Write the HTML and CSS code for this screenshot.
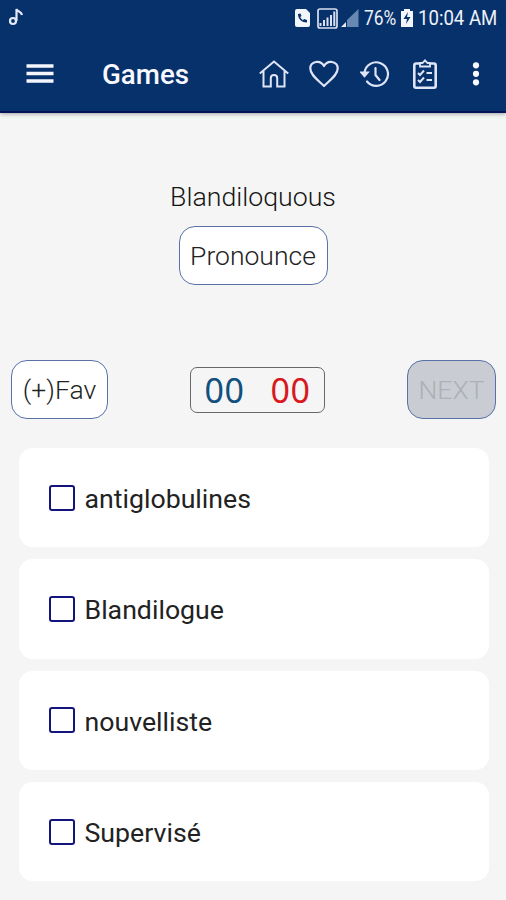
FILE: index.html
```html
<!DOCTYPE html>
<html lang="en">
<head>
<meta charset="utf-8">
<title>Games</title>
<link rel="stylesheet" href="styles.css">
</head>
<body>
<header class="top">
  <div class="status">
    <svg class="note" width="16" height="20" viewBox="0 0 16 20" fill="none" stroke="#e6eaf6" stroke-width="2.200"><circle cx="5" cy="14" r="3"/><path d="M8.500 14V2c1 3 5 2 5.500 6"/></svg>
    <svg class="call" width="15" height="18" viewBox="0 0 15 18"><path fill="#f3f5fc" d="M2 0h9l4 4v12q0 2-2 2H2q-2 0-2-2V2q0-2 2-2z"/><path d="M3 5c0 5 4 8.500 9 8.500V11l-3-1-1 1.200Q6 10 5.200 8L6.500 7l-1-2.500z" fill="#07316b"/></svg>
    <svg class="sig" width="21" height="21" viewBox="0 0 21 21"><rect x="1" y="1" width="19" height="19" rx="2" fill="none" stroke="#d9e0f0" stroke-width="1.700"/><path d="M3.500 18v-3M7 18v-6M10.500 18V9.500M14 18V7M17.300 18V3.500" stroke="#d9e0f0" stroke-width="2"/></svg>
    <svg class="sig2" width="18" height="18" viewBox="0 0 18 18"><path d="M17.500 0v18H6V11z" fill="#6788b2"/><path d="M5 13v5H0z" fill="#e6eaf6"/></svg>
    <span class="pct">76%</span>
    <svg class="bat" width="12" height="18" viewBox="0 0 12 18"><path d="M3 0h6v2h3v16H0V2h3z" fill="#f3f5fc"/><path d="M7 3 2.500 10H6l-1 5 4.500-7H6z" fill="#07316b"/></svg>
    <span class="time">10:04 AM</span>
  </div>
  <nav class="bar">
    <svg class="menu" width="28" height="22" viewBox="0 0 28 22"><path d="M.5 3h27M.5 10.500h27M.5 18h27" stroke="#f5f6fd" stroke-width="3.600"/></svg>
    <h1>Games</h1>
    <svg class="home" width="30" height="28" viewBox="0 0 30 28" fill="none" stroke="#dfe4f6" stroke-width="2"><path d="M.8 13.500 15 1.500l14.200 12M4.500 11v15.500h7.300V18q0-3 3.200-3t3.200 3v8.500h7.300V11"/></svg>
    <svg class="heart" width="30" height="28" viewBox="0 0 30 28" fill="none" stroke="#dfe4f6" stroke-width="2.200" stroke-linejoin="round"><path d="M15 26C9 20 1.300 15 1.300 8.500 1.300 1 11.500-.5 15 6c3.500-6.500 13.700-5 13.700 2.500C28.700 15 21 20 15 26z"/></svg>
    <svg class="hist" width="30" height="28" viewBox="0 0 30 28" fill="none" stroke="#dfe4f6" stroke-width="2.200"><path d="M4.500 12.500A11.800 11.800 0 1 1 7 21.500M15.500 8v7l4 5" stroke-linecap="round"/><path d="M1.500 12.500h6L4.500 16z" fill="#dfe4f6"/></svg>
    <svg class="clip" width="24" height="30" viewBox="0 0 24 30" fill="none" stroke="#dfe4f6" stroke-width="2.600"><path d="M7 4.500H3q-1.700 0-1.700 1.700V27q0 1.700 1.700 1.700h18q1.700 0 1.700-1.700V6.200q0-1.700-1.700-1.700h-4"/><path d="M7 7.500V4h2.500L12 1.300 14.500 4H17v3.500z" stroke-width="1.800"/><path d="m5 14 2 2 4-4.500M5 21l2 2 4-4.500M13.500 14H19M13.500 21H19" stroke-width="2"/></svg>
    <svg class="more" width="8" height="24" viewBox="0 0 8 24" fill="#f8f9ff"><circle cx="4" cy="3.300" r="3.100"/><circle cx="4" cy="11.800" r="3.100"/><circle cx="4" cy="20.300" r="3.100"/></svg>
  </nav>
</header>
<main>
  <p class="word">Blandiloquous</p>
  <button class="btn pronounce">Pronounce</button>
  <div class="row">
    <button class="btn fav">(+)Fav</button>
    <div class="score"><span class="right">00</span><span class="wrong">00</span></div>
    <button class="btn next" disabled>NEXT</button>
  </div>
  <div class="list">
    <label class="card"><i class="box"></i><span>antiglobulines</span></label>
    <label class="card"><i class="box"></i><span>Blandilogue</span></label>
    <label class="card"><i class="box"></i><span>nouvelliste</span></label>
    <label class="card"><i class="box"></i><span>Supervisé</span></label>
  </div>
</main>
</body>
</html>
```
FILE: styles.css
```css
* { box-sizing: border-box; }
body { margin: 0; width: 506px; height: 900px; overflow: hidden; background: #f5f5f5; font-family: Roboto, sans-serif; color: #161616; }
svg { flex: none; display: block; }
.top { height: 113px; background: #07316b; border-bottom: 2px solid #06125a; box-shadow: 0 1px 4px rgba(0,0,0,.35); }
.status { display: flex; align-items: center; height: 36px; padding-left: 8px; color: #eef1fa; font-size: 20px; line-height: 36px; white-space: nowrap; }
.note { margin-top: -2px; }
.call { margin-left: 271px; }
.sig { margin-left: 7px; }
.sig2 { margin-left: 3px; }
.pct { margin-left: 5px; width: 34px; transform: scaleX(.87); transform-origin: left; }
.bat { margin-left: 3px; }
.time { margin-left: 5px; transform: scaleX(.93); transform-origin: left; }
.bar { display: flex; align-items: center; height: 76px; padding-left: 26px; }
.menu { margin-top: -1px; }
h1 { margin: 2px 0 0 48px; width: 157px; font-size: 27.700px; line-height: 32px; font-weight: 500; color: #f8f8ff; }
.heart { margin-left: 20px; }
.hist { margin-left: 21px; }
.clip { margin-left: 23px; }
.more { margin-left: 35px; }
main { display: flex; flex-direction: column; align-items: center; padding-top: 66px; }
.word { margin: 0; font-size: 26.700px; line-height: 36px; font-weight: 300; }
.btn { height: 59px; padding: 1px 0 0; border: 1.500px solid #5872a8; border-radius: 16px; background: #fff; font: 300 26.500px/32px Roboto, sans-serif; color: #222; }
.pronounce { width: 149px; margin-top: 11px; }
.row { display: flex; align-items: center; justify-content: space-between; width: 485px; margin: 75px 0 0 1px; }
.fav { width: 97px; }
.score { display: flex; justify-content: center; gap: 26px; width: 135px; height: 46px; margin-left: 0; border: 1.500px solid #686868; border-radius: 7px; font: 400 34px/45px "Noto Sans", sans-serif; letter-spacing: .5px; }
.right { color: #11507f; }
.wrong { color: #d7191f; }
.next { width: 89px; background: #c9cdd3; color: #adb0b4; }
.list { display: grid; gap: 12px; width: 470px; margin: 29px 0 0 1px; }
.card { display: flex; align-items: center; height: 99.300px; padding-left: 30px; border-radius: 14px; background: #fff; font-size: 26.700px; font-weight: 400; color: #222; }
.box { width: 26px; height: 26px; border: 2px solid #14147d; border-radius: 3px; }
.card span { margin: 3px 0 0 10px; }
```
